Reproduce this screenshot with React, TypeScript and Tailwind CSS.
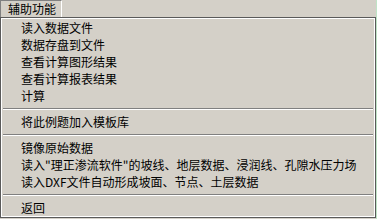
import React from 'react';

type Entry = { label: string } | { sep: true };

const entries: Entry[] = [
  { label: '读入数据文件' },
  { label: '数据存盘到文件' },
  { label: '查看计算图形结果' },
  { label: '查看计算报表结果' },
  { label: '计算' },
  { sep: true },
  { label: '将此例题加入模板库' },
  { sep: true },
  { label: '镜像原始数据' },
  { label: '读入"理正渗流软件"的坡线、地层数据、浸润线、孔隙水压力场' },
  { label: '读入DXF文件自动形成坡面、节点、土层数据' },
  { sep: true },
  { label: '返回' },
];

const App: React.FC = () => {
  return (
    <div
      className="flex w-[377px] h-[219px] overflow-hidden bg-[#d4d0c8] text-black text-[12px]"
      style={{ fontFamily: '"Noto Sans CJK SC", "Noto Sans", sans-serif' }}
    >
      <div className="flex flex-col w-[376px]">
        {/* menu bar */}
        <div className="flex h-[17px]">
          <div className="w-[62px] h-[17px] border-t border-l border-[#808080] border-r border-r-white pl-[7px] leading-[15px]">
            辅助功能
          </div>
        </div>

        {/* dropdown */}
        <div className="border border-[#5a5a5a]">
          <div className="border border-white">
            {entries.map((e, i) =>
              'sep' in e ? (
                <div key={i} className="h-[9px] flex flex-col justify-center mx-[1px]">
                  <div className="h-px bg-[#808080]" />
                  <div className="h-px bg-white" />
                </div>
              ) : (
                <div key={i} className="h-[17px] leading-[17px] pl-[19px] whitespace-nowrap">
                  {e.label}
                </div>
              )
            )}
          </div>
        </div>
      </div>
      <div className="w-px bg-[#bfe3c6]" />
    </div>
  );
};

export default App;
